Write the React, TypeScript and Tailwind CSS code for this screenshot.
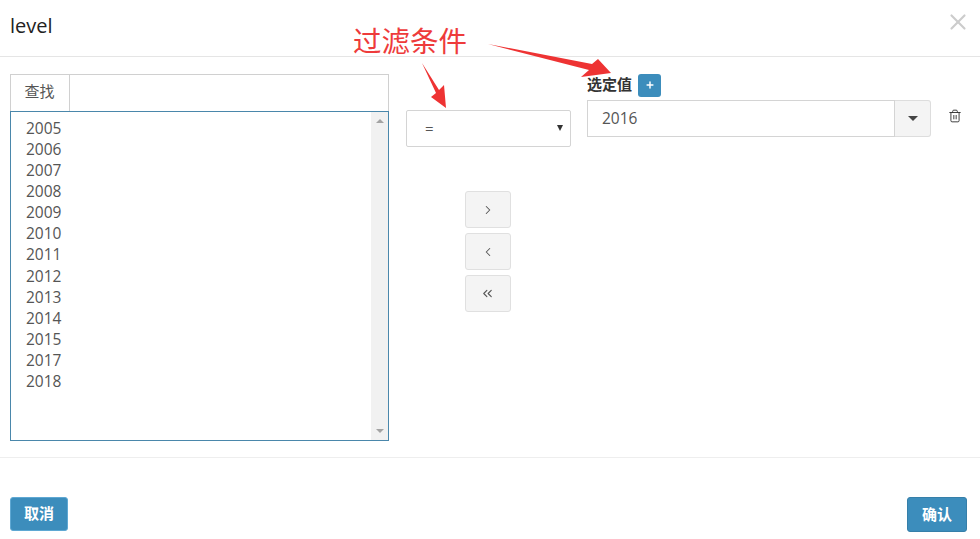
import React from 'react'
import { ChevronRight, ChevronLeft, ChevronsLeft, Trash2, Plus, X } from 'lucide-react'

const years = ['2005', '2006', '2007', '2008', '2009', '2010', '2011', '2012', '2013', '2014', '2015', '2017', '2018']

const fontStack = { fontFamily: '"Open Sans", "Noto Sans CJK SC", sans-serif' }

function MoveButton({ children }: { children: React.ReactNode }) {
  return (
    <button className="w-[46px] h-[37px] flex items-center justify-center bg-[#f4f4f4] border border-[#e0e0e0] rounded-[3px] text-[#555555]">
      {children}
    </button>
  )
}

function YearList() {
  return (
    <div className="w-[379px]">
      <div className="h-[37px] flex border border-b-0 border-[#d0d0d0]">
        <div className="w-[59px] flex items-center justify-center pb-[3px] pr-[1px] border-r border-[#d0d0d0] text-[15px] text-[#555555]">查找</div>
      </div>
      <div className="h-[330px] flex border border-[#4a87ab]">
        <ul className="flex-1 pt-[6px] pl-[15px] text-[15.5px] leading-[21.08px] text-[#555555]">
          {years.map((y) => (
            <li key={y}>{y}</li>
          ))}
        </ul>
        <div className="w-[17px] bg-[#f1f1f1] flex flex-col items-center justify-between py-[7px]">
          <span className="w-0 h-0 border-x-[4px] border-x-transparent border-b-[4px] border-b-[#a3a3a3]"></span>
          <span className="w-0 h-0 border-x-[4px] border-x-transparent border-t-[4px] border-t-[#a3a3a3]"></span>
        </div>
      </div>
    </div>
  )
}

function Annotation() {
  return (
    <div className="absolute inset-0 pointer-events-none">
      <span className="absolute left-[353px] top-[21px] text-[28.5px] leading-[40px] text-[#ee3b3b] whitespace-nowrap">过滤条件</span>
      <svg className="absolute left-0 top-0" width="980" height="120" viewBox="0 0 980 120">
        <polygon points="422,63 439,90 444,85 446,108 431,97 436,93" fill="#ee3333" />
        <polygon points="488,44 592,64 598,59 611,73 581,77 589,70" fill="#ee3333" />
      </svg>
    </div>
  )
}

export default function App() {
  return (
    <div className="relative w-[980px] h-[539px] bg-white overflow-hidden text-[#333333]" style={fontStack}>
      <header className="h-[57px] flex items-start justify-between border-b border-[#e5e5e5] pl-[10px] pr-[9px] pt-[13px]">
        <h1 className="text-[20px] leading-[26px] text-[#222222]">level</h1>
        <X className="-mt-[4px] text-[#cccccc]" size={26} strokeWidth={2} />
      </header>

      <main className="h-[401px] border-b border-[#eeeeee] pl-[10px] pt-[17px] flex">
        <YearList />

        <div className="ml-[17px] mr-[16px] w-[165px] pt-[36px] flex flex-col items-center">
          <div className="w-[165px] h-[37px] flex items-center justify-between pl-[18px] pr-[7px] border border-[#d4d4d4] rounded-[2px] text-[15px] text-[#555555]">
            <span>=</span>
            <span className="w-0 h-0 -mt-[2px] border-x-[3.5px] border-x-transparent border-t-[6px] border-t-[#333333]"></span>
          </div>
          <div className="mt-[44px] pr-[2px] flex flex-col gap-[5px]">
            <MoveButton><ChevronRight size={14} strokeWidth={1.8} /></MoveButton>
            <MoveButton><ChevronLeft size={14} strokeWidth={1.8} /></MoveButton>
            <MoveButton><ChevronsLeft size={15} strokeWidth={1.8} /></MoveButton>
          </div>
        </div>

        <div className="flex-1">
          <div className="h-[26px] flex items-center gap-[5px] -mt-[2px] mb-[2px]">
            <span className="text-[15px] leading-[20px] -mt-[2px] font-semibold text-[#333333] w-[46px]">选定值</span>
            <button className="w-[23px] h-[23px] flex items-center justify-center bg-[#3c8dbc] rounded-[3px] text-white">
              <Plus size={10} strokeWidth={3.5} />
            </button>
          </div>
          <div className="flex items-center">
            <div className="w-[308px] h-[37px] flex items-center pl-[14px] pt-[1px] border border-[#d4d4d4] text-[15.5px] text-[#555555]">2016</div>
            <div className="w-[36px] h-[37px] flex items-center justify-center bg-[#f4f4f4] border border-l-0 border-[#dddddd] rounded-r-[3px]">
              <span className="w-0 h-0 border-x-[5px] border-x-transparent border-t-[5px] border-t-[#444444]"></span>
            </div>
            <Trash2 className="ml-[17px] -mt-[5px] text-[#333333]" size={14} strokeWidth={1.6} />
          </div>
        </div>
      </main>

      <footer className="flex justify-between pl-[10px] pr-[13px] pt-[39px]">
        <button className="w-[58px] h-[34px] pb-[1px] bg-[#3c8dbc] border border-[#5fa8d3] rounded-[3px] text-white text-[15px] font-bold">取消</button>
        <button className="w-[60px] h-[35px] pb-[1px] bg-[#3c8dbc] border border-[#367fa9] rounded-[3px] text-white text-[15px] font-bold">确认</button>
      </footer>

      <Annotation />
    </div>
  )
}
